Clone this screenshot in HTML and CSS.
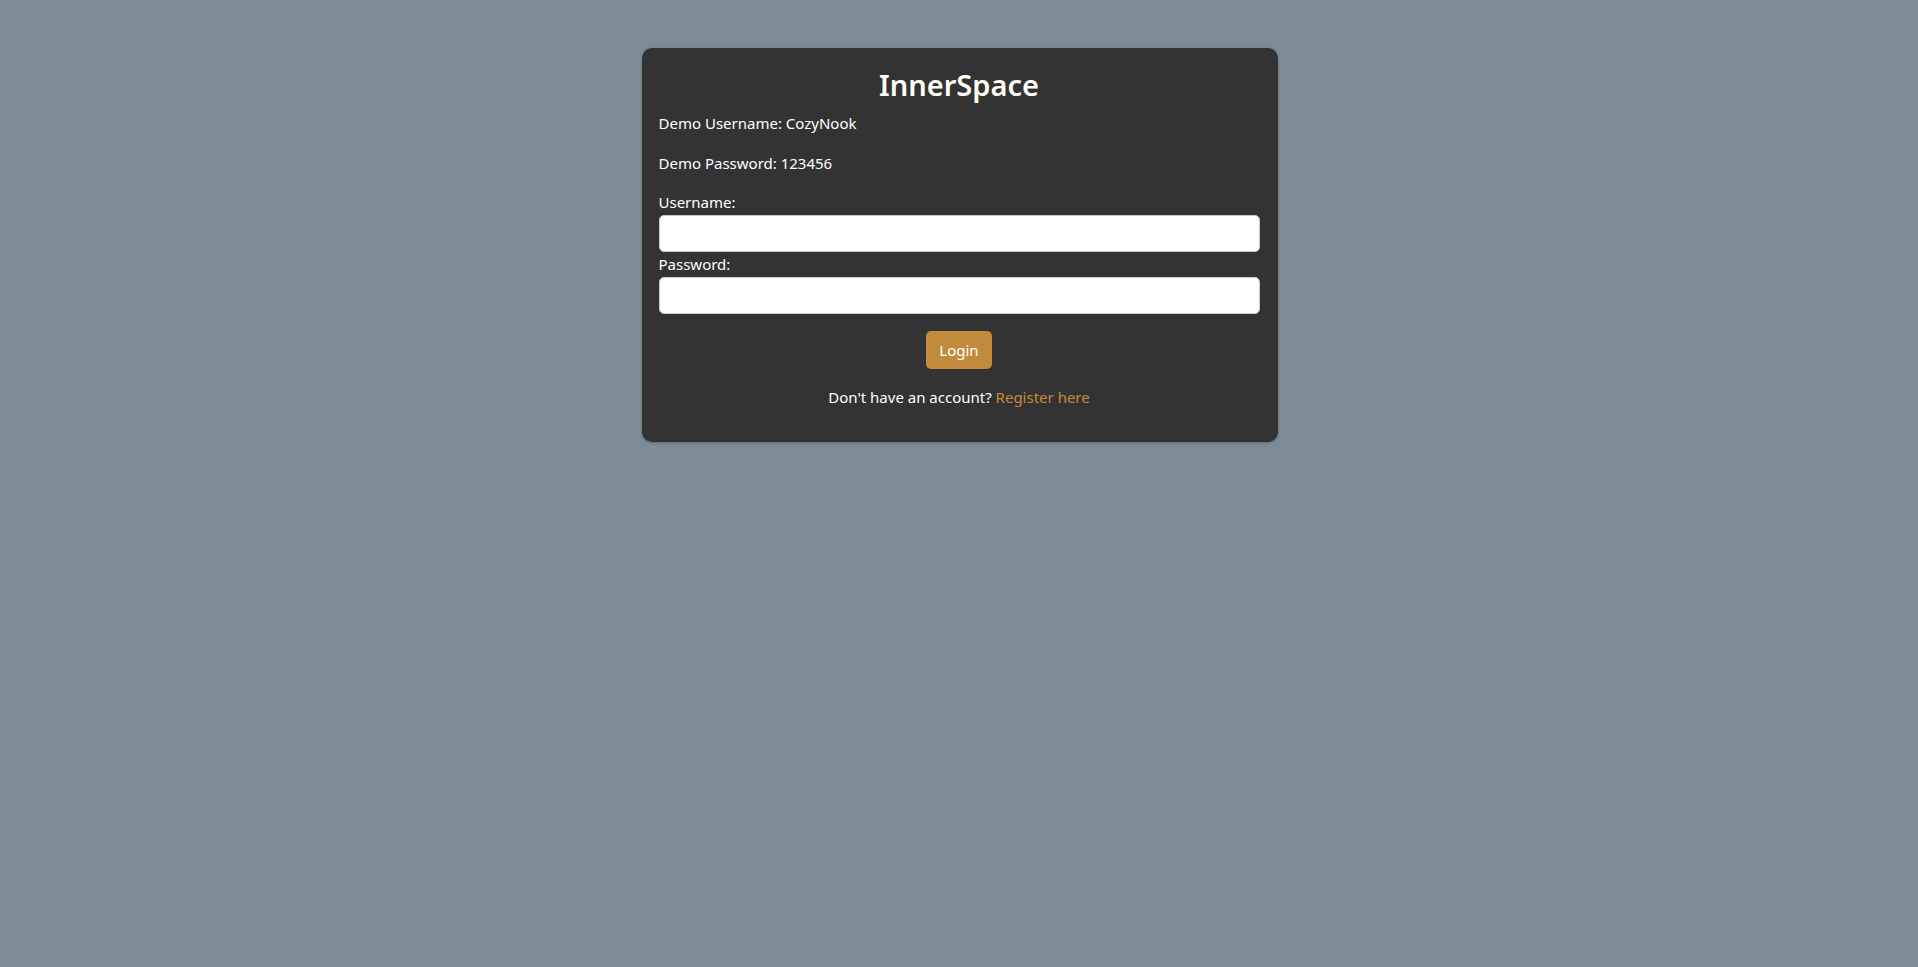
FILE: index.html
```html
<!DOCTYPE html>
<html lang="en">
<head>
<meta charset="utf-8">
<title>InnerSpace - Login</title>
<link rel="stylesheet" href="styles.css">
</head>
<body>
<main class="card">
  <h1 class="title">InnerSpace</h1>
  <p class="demo">Demo Username: CozyNook</p>
  <p class="demo">Demo Password: 123456</p>
  <form class="form">
    <div class="field">
      <label class="label" for="username">Username:</label>
      <input class="input" id="username" type="text">
    </div>
    <div class="field">
      <label class="label" for="password">Password:</label>
      <input class="input" id="password" type="password">
    </div>
    <div class="actions">
      <button class="btn" type="button">Login</button>
    </div>
  </form>
  <p class="register">Don't have an account? <a class="link" href="#">Register here</a></p>
</main>
</body>
</html>
```

FILE: styles.css
```css
html, body {
  margin: 0;
  padding: 0;
}
body {
  background: #7d8c96;
  font-family: "Segoe UI", "Noto Sans", "Open Sans", sans-serif;
  font-size: 16px;
  color: #ffffff;
  min-height: 100vh;
  padding-left: 1px;
}
.card {
  box-sizing: border-box;
  width: 636px;
  margin: 48px auto 0;
  padding: 17px 18px 16px 17px;
  background: #333333;
  border-radius: 10px;
  box-shadow: 0 1px 3px rgba(0, 0, 0, 0.25);
}
.title {
  margin: 0 0 6px;
  font-size: 29px;
  line-height: 40px;
  font-weight: 600;
  text-align: center;
  color: #fffdf5;
}
.demo {
  margin: 0 0 16px;
  line-height: 24px;
  font-size: 15px;
}
.form {
  display: flex;
  flex-direction: column;
}
.field {
  display: flex;
  flex-direction: column;
  margin-bottom: 1px;
}
.label {
  display: block;
  line-height: 23px;
  margin-bottom: 1px;
  font-size: 15px;
}
.input {
  box-sizing: border-box;
  width: 100%;
  height: 37px;
  margin: 0;
  border: 1px solid #c9c9c9;
  border-radius: 5px;
  background: #ffffff;
  font: inherit;
  padding: 0 8px;
}
.actions {
  display: flex;
  justify-content: center;
  margin-top: 16px;
}
.btn {
  height: 38px;
  padding: 0 13px;
  border: none;
  border-radius: 5px;
  background: #c28b3c;
  color: #ffffff;
  font-family: inherit;
  font-size: 15px;
}
.register {
  margin: 16px 0 17px;
  line-height: 24px;
  text-align: center;
  font-size: 15px;
}
.link {
  color: #c8883e;
  text-decoration: none;
}
```
